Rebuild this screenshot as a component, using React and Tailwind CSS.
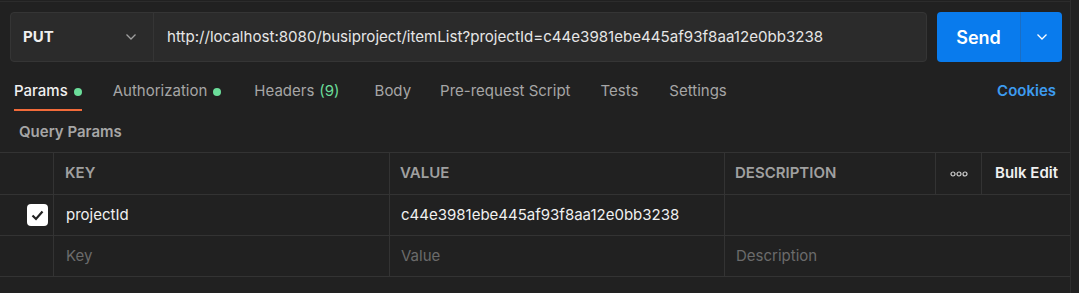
import React from "react";

function Chevron({ className }) {
  return (
    <svg className={className} width="12" height="8" viewBox="0 0 12 8" fill="none">
      <path d="M1.5 1.5L6 6L10.5 1.5" stroke="currentColor" strokeWidth="1.3" />
    </svg>
  );
}

export default function App() {
  const font = { fontFamily: "Inter, 'Noto Sans', sans-serif" };
  return (
    <div className="w-[1079px] h-[293px] bg-[#212121] flex overflow-hidden" style={font}>
      <div className="w-[1070px] h-full flex flex-col">
        <div className="h-px mt-px bg-[#2c2c2c]" />
        {/* request bar */}
        <div className="flex items-stretch h-[50px] mt-[10px] pl-[10px] pr-[8px]">
          <div className="flex flex-1 rounded-[4px] border border-[#353535] bg-[#2b2b2b] overflow-hidden">
            <div className="w-[143px] flex items-center justify-between pl-[12px] pr-[16px] border-r border-[#353535]">
              <span className="text-[15px] font-bold text-[#f0f0f0]">PUT</span>
              <Chevron className="text-[#a0a0a0]" />
            </div>
            <div className="flex items-center pl-[13px] text-[15.1px] text-[#e6e6e6]">
              http://localhost:8080/busiproject/itemList?projectId=c44e3981ebe445af93f8aa12e0bb3238
            </div>
          </div>
          <div className="ml-[10px] w-[125px] flex rounded-[4px] bg-[#097bed] overflow-hidden">
            <div className="w-[84px] flex items-center justify-center text-[18px] font-semibold text-white border-r border-[#1a6ec4]">
              Send
            </div>
            <div className="flex-1 flex items-center justify-center text-white">
              <Chevron />
            </div>
          </div>
        </div>
        {/* tabs */}
        <div className="flex items-stretch h-[40px] mt-[10px] pl-[14px] pr-[14px] text-[15px]">
          <div className="relative flex items-center pb-px text-[#f0f0f0] font-medium">
            Params<span className="ml-[6px] w-[8px] h-[8px] rounded-full bg-[#6bdd9a]" />
            <div className="absolute left-0 right-0 bottom-[1px] h-[2px] bg-[#f26b3a]" />
          </div>
          <div className="flex items-center pb-px ml-[31px] text-[#a6a6a6]">
            Authorization<span className="ml-[6px] w-[8px] h-[8px] rounded-full bg-[#6bdd9a]" />
          </div>
          <div className="flex items-center pb-px ml-[33px] text-[#a6a6a6]">
            Headers<span className="ml-[5px] text-[#6bdd9a]">(9)</span>
          </div>
          <div className="flex items-center pb-px ml-[35px] text-[#a6a6a6]">Body</div>
          <div className="flex items-center pb-px ml-[29px] text-[#a6a6a6]">Pre-request Script</div>
          <div className="flex items-center pb-px ml-[30px] text-[#a6a6a6]">Tests</div>
          <div className="flex items-center pb-px ml-[31px] text-[#a6a6a6]">Settings</div>
          <div className="flex items-center pb-px ml-auto text-[#3d9cf0] font-semibold">Cookies</div>
        </div>
        {/* query params */}
        <div className="h-[40px] flex items-center pl-[19px] text-[15px] font-semibold text-[#a6a6a6]">
          Query Params
        </div>
        {/* table */}
        <div className="border-t border-[#333333] text-[15px]">
          <div className="flex h-[42px] border-b border-[#333333] font-semibold text-[#a0a0a0]">
            <div className="w-[54px] border-r border-[#333333]" />
            <div className="w-[336px] border-r border-[#333333] flex items-center pl-[11px]">KEY</div>
            <div className="w-[335px] border-r border-[#333333] flex items-center pl-[10px]">VALUE</div>
            <div className="w-[211px] border-r border-[#333333] flex items-center pl-[10px]">DESCRIPTION</div>
            <div className="w-[46px] border-r border-[#333333] flex items-center justify-center">
              <svg width="18" height="6" viewBox="0 0 18 6" fill="none">
                <circle cx="3" cy="3" r="2" stroke="#d0d0d0" strokeWidth="1.2" />
                <circle cx="9" cy="3" r="2" stroke="#d0d0d0" strokeWidth="1.2" />
                <circle cx="15" cy="3" r="2" stroke="#d0d0d0" strokeWidth="1.2" />
              </svg>
            </div>
            <div className="flex-1 flex items-center pl-[13px] text-[#f0f0f0]">Bulk Edit</div>
          </div>
          <div className="flex h-[41px] border-b border-[#333333] text-[#f0f0f0]">
            <div className="w-[54px] border-r border-[#333333] flex items-center justify-end pr-[5px]">
              <div className="w-[21px] h-[22px] rounded-[4px] bg-white flex items-center justify-center">
                <svg width="13" height="11" viewBox="0 0 13 11" fill="none">
                  <path d="M1.5 5.5L5 9L11.5 1.5" stroke="#212121" strokeWidth="2.2" />
                </svg>
              </div>
            </div>
            <div className="w-[336px] border-r border-[#333333] flex items-center pl-[12px]">projectId</div>
            <div className="w-[335px] border-r border-[#333333] flex items-center pl-[11px]">c44e3981ebe445af93f8aa12e0bb3238</div>
            <div className="flex-1" />
          </div>
          <div className="flex h-[41px] border-b border-[#333333] text-[#6b6b6b]">
            <div className="w-[54px] border-r border-[#333333]" />
            <div className="w-[336px] border-r border-[#333333] flex items-center pl-[12px]">Key</div>
            <div className="w-[335px] border-r border-[#333333] flex items-center pl-[11px]">Value</div>
            <div className="flex-1 flex items-center pl-[11px]">Description</div>
          </div>
        </div>
      </div>
      <div className="w-px h-full bg-[#2e2e2e]" />
    </div>
  );
}
